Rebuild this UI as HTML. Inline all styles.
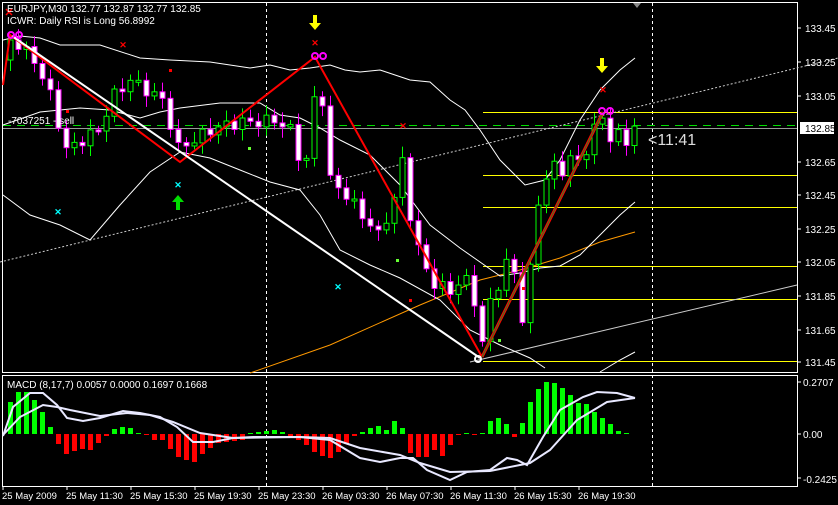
<!DOCTYPE html>
<html><head><meta charset="utf-8"><style>
body{margin:0;background:#000;width:838px;height:505px;overflow:hidden}
svg{display:block}
text{font-family:"Liberation Sans",sans-serif;font-size:10px;fill:#fff}
</style></head><body>
<svg id="s" width="838" height="505" viewBox="0 0 838 505" xmlns="http://www.w3.org/2000/svg">
<rect width="838" height="505" fill="#000"/>
<rect x="2.5" y="2.5" width="795" height="370" fill="none" stroke="#fff"/>
<rect x="2.5" y="375.5" width="795" height="111" fill="none" stroke="#fff"/>
<line x1="266.5" y1="3" x2="266.5" y2="486" stroke="#fff" stroke-dasharray="3,3"/>
<line x1="652.5" y1="3" x2="652.5" y2="486" stroke="#fff" stroke-dasharray="3,3"/>
<polygon points="633,3 641,3 637,8" fill="#888"/>
<line x1="483" y1="112.5" x2="797" y2="112.5" stroke="#ffff00"/>
<line x1="483" y1="175.5" x2="797" y2="175.5" stroke="#ffff00"/>
<line x1="483" y1="207.5" x2="797" y2="207.5" stroke="#ffff00"/>
<line x1="483" y1="266.5" x2="797" y2="266.5" stroke="#ffff00"/>
<line x1="483" y1="299.5" x2="797" y2="299.5" stroke="#ffff00"/>
<line x1="483" y1="361.5" x2="797" y2="361.5" stroke="#ffff00"/>
<line x1="3" y1="125.5" x2="797" y2="125.5" stroke="#00dd00" stroke-dasharray="8,6"/>
<line x1="3" y1="128.5" x2="797" y2="128.5" stroke="#999"/>
<line x1="0" y1="262" x2="838" y2="58" stroke="#ccc" stroke-dasharray="2,2"/>
<line x1="470" y1="362" x2="797" y2="285" stroke="#ccc"/>
<polyline points="250,373 330,345 420,305 480,280 520,270 560,258 600,242 635,232" fill="none" stroke="#f90"/>
<g fill="none" stroke="#fff" stroke-width="1">
<polyline points="3,40 20,36 40,38 60,45 100,45 140,58 170,60 210,62 250,68 270,65 290,70 310,68 330,65 345,70 360,72 380,70 410,80 430,82 450,100 465,110 480,130 500,160 525,185 545,180 560,160 580,120 600,90 620,70 635,58"/>
<polyline points="3,125 40,112 80,108 110,110 140,118 160,112 180,108 220,103 260,103 280,115 300,118 320,128 340,140 370,155 400,185 430,225 460,248 480,262 500,276 520,273 540,268 560,266 580,255 600,235 620,215 635,202"/>
<polyline points="3,195 30,215 60,225 90,240 120,205 150,172 180,152 210,158 240,170 270,182 300,190 320,215 340,250 370,265 400,278 440,300 470,330 500,345 530,358 545,368"/>
<polyline points="600,372 620,360 635,352"/>
</g>
<g id="candles"></g>
<polyline points="3,85 10,35 180,162 315,57 482,357" fill="none" stroke="#f00" stroke-width="2"/>
<line x1="482" y1="357" x2="603" y2="112" stroke="#f00" stroke-width="3"/>
<line x1="482" y1="357" x2="603" y2="112" stroke="#282" stroke-width="1"/>
<line x1="12" y1="36" x2="480" y2="358" stroke="#fff" stroke-width="2"/>
<g fill="none" stroke="#f0f" stroke-width="2">
<circle cx="11" cy="35" r="3"/><circle cx="19" cy="35" r="3"/>
<circle cx="315" cy="56" r="3"/><circle cx="323" cy="56" r="3"/>
<circle cx="602" cy="111" r="3"/><circle cx="610" cy="111" r="3"/>
</g>
<circle cx="478" cy="359" r="3" fill="none" stroke="#fff" stroke-width="2"/>
<g font-family="Liberation Sans" font-weight="bold" font-size="11" text-anchor="middle">
<text x="9" y="16" style="fill:#f00;font-size:11px">✕</text>
<text x="123" y="48" style="fill:#f00;font-size:9px">✕</text>
<text x="315" y="46" style="fill:#f00;font-size:9px">✕</text>
<text x="403" y="129" style="fill:#f00;font-size:9px">✕</text>
<text x="603" y="93" style="fill:#f00;font-size:9px">✕</text>
<text x="58" y="215" style="fill:#0ff;font-size:9px">✕</text>
<text x="178" y="188" style="fill:#0ff;font-size:9px">✕</text>
<text x="338" y="290" style="fill:#0ff;font-size:9px">✕</text>
</g>
<g fill="#f00"><rect x="66" y="110" width="3" height="3"/><rect x="169" y="69" width="3" height="3"/><rect x="409" y="299" width="3" height="3"/><rect x="522" y="287" width="3" height="3"/></g>
<g fill="#6f3"><rect x="248" y="147" width="3" height="3"/><rect x="396" y="259" width="3" height="3"/><rect x="498" y="339" width="3" height="3"/></g>
<path d="M313,15 v8 h-4 l6,7 l6,-7 h-4 v-8 z" fill="#ff0"/>
<path d="M600,58 v8 h-4 l6,7 l6,-7 h-4 v-8 z" fill="#ff0"/>
<path d="M176,210 v-8 h-4 l6,-7 l6,7 h-4 v8 z" fill="#0d0"/>
<text x="7" y="12">EURJPY,M30  132.77 132.87 132.77 132.85</text>
<text x="7" y="24">ICWR: Daily RSI is Long 56.8992</text>
<text x="8" y="124">-7037251 - sell</text>
<text x="648" y="145" style="font-size:16px;fill:#ddd">&lt;11:41</text>
<g>
<text x="805" y="32">133.45</text>
<text x="805" y="66">133.25</text>
<text x="805" y="100">133.05</text>
<rect x="800" y="122" width="34" height="12" fill="#fff"/>
<text x="805" y="132" style="fill:#000">132.85</text>
<text x="805" y="166">132.65</text>
<text x="805" y="199">132.45</text>
<text x="805" y="233">132.25</text>
<text x="805" y="266">132.05</text>
<text x="805" y="300">131.85</text>
<text x="805" y="334">131.65</text>
<text x="805" y="366">131.45</text>
<text x="803" y="386">0.2707</text>
<text x="803" y="438">0.00</text>
<text x="803" y="483">-0.2425</text>
</g>
<g stroke="#fff"><line x1="797" y1="28" x2="801" y2="28"/><line x1="797" y1="62" x2="801" y2="62"/><line x1="797" y1="96" x2="801" y2="96"/><line x1="797" y1="162" x2="801" y2="162"/><line x1="797" y1="195" x2="801" y2="195"/><line x1="797" y1="229" x2="801" y2="229"/><line x1="797" y1="262" x2="801" y2="262"/><line x1="797" y1="296" x2="801" y2="296"/><line x1="797" y1="330" x2="801" y2="330"/><line x1="797" y1="362" x2="801" y2="362"/><line x1="797" y1="382" x2="801" y2="382"/><line x1="797" y1="434" x2="801" y2="434"/><line x1="797" y1="478" x2="801" y2="478"/></g>
<text x="7" y="388">MACD  (8,17,7) 0.0057 0.0000 0.1697 0.1668</text>
<g id="macd"></g>
<g fill="none" stroke="#e8e8ff" stroke-width="2">
<polyline points="3,436 13,407 30,393 43,393 57,405 67,418 83,421 100,418 123,411 140,413 160,417 177,427 193,442 213,442 233,438 253,437 300,437 330,440 360,458 380,462 400,458 413,458 427,470 450,480 467,472 490,470 507,458 517,460 527,465 543,437 560,410 583,397 597,392 617,393 635,398"/>
<polyline points="3,435 20,417 43,405 57,407 70,410 100,416 127,413 150,415 173,422 200,433 233,438 300,437 330,438 360,448 400,455 420,463 450,472 490,471 530,463 550,450 577,420 607,402 635,398"/>
</g>
<g stroke="#fff"><line x1="3" y1="486" x2="3" y2="490"/><line x1="67" y1="486" x2="67" y2="490"/><line x1="131" y1="486" x2="131" y2="490"/><line x1="195" y1="486" x2="195" y2="490"/><line x1="259" y1="486" x2="259" y2="490"/><line x1="323" y1="486" x2="323" y2="490"/><line x1="387" y1="486" x2="387" y2="490"/><line x1="451" y1="486" x2="451" y2="490"/><line x1="515" y1="486" x2="515" y2="490"/><line x1="579" y1="486" x2="579" y2="490"/></g>
<g style="font-size:9.5px">
<text x="2" y="499" style="font-size:9.5px">25 May 2009</text>
<text x="66" y="499" style="font-size:9.5px">25 May 11:30</text>
<text x="130" y="499" style="font-size:9.5px">25 May 15:30</text>
<text x="194" y="499" style="font-size:9.5px">25 May 19:30</text>
<text x="258" y="499" style="font-size:9.5px">25 May 23:30</text>
<text x="322" y="499" style="font-size:9.5px">26 May 03:30</text>
<text x="386" y="499" style="font-size:9.5px">26 May 07:30</text>
<text x="450" y="499" style="font-size:9.5px">26 May 11:30</text>
<text x="514" y="499" style="font-size:9.5px">26 May 15:30</text>
<text x="578" y="499" style="font-size:9.5px">26 May 19:30</text>
</g>
</svg>
<script>
(function(){
var NS="http://www.w3.org/2000/svg";
function el(p,t,a){var e=document.createElementNS(NS,t);for(var k in a)e.setAttribute(k,a[k]);p.appendChild(e);return e;}
var kp=[[10,40],[18,45],[34,60],[50,95],[66,150],[82,140],[98,130],[114,95],[130,80],[146,90],[162,100],[178,148],[194,140],[210,130],[226,125],[242,122],[258,122],[274,120],[290,130],[298,155],[306,160],[314,100],[322,100],[330,180],[346,195],[362,215],[378,235],[394,200],[402,160],[410,215],[418,250],[434,285],[450,290],[466,280],[474,300],[482,345],[490,300],[498,285],[506,265],[514,270],[522,320],[530,270],[538,200],[546,180],[554,165],[562,170],[570,160],[578,160],[586,150],[594,130],[602,115],[610,140],[618,135],[626,140],[634,128]];
function at(x){for(var i=0;i<kp.length-1;i++){if(x<=kp[i+1][0]){var a=kp[i],b=kp[i+1];return a[1]+(b[1]-a[1])*(x-a[0])/(b[0]-a[0]);}}return kp[kp.length-1][1];}
var g=document.getElementById("candles");var prev=at(10)+20;
for(var i=0;i<79;i++){var x=10+8*i;if(x>636)break;var c=at(x)+Math.sin(i*2.3)*6;var o=prev;
var hi=Math.min(o,c)-3-Math.abs(Math.sin(i*1.7))*8,lo=Math.max(o,c)+3+Math.abs(Math.cos(i*1.3))*8;
var bull=c<o;var col=bull?"#0f0":"#f0f";
el(g,"line",{x1:x+0.5,y1:hi,x2:x+0.5,y2:lo,stroke:col});
var t=Math.min(o,c),h=Math.max(2,Math.abs(o-c));
el(g,"rect",{x:x-2,y:t,width:5,height:h,fill:bull?"#000":"#fff",stroke:col});
prev=c;}
var mv=[402,392,392,400,412,427,444,454,451,449,450,443,436,429,427,428,433,435,440,440,449,457,460,462,454,448,443,442,441,440,433,432,431,430,432,438,440,445,452,456,458,452,444,436,432,428,426,430,421,428,453,457,457,450,456,445,435,433,435,433,421,418,424,437,423,402,389,382,383,388,395,403,404,412,418,424,431,433];
var m=document.getElementById("macd");
for(var j=0;j<mv.length;j++){var bx=8+8*j;if(bx>636)break;var v=mv[j];
if(v<434)el(m,"rect",{x:bx,y:v,width:5,height:434-v,fill:"#0f0"});
else el(m,"rect",{x:bx,y:434,width:5,height:Math.max(1,v-434),fill:"#f00"});}
})();
</script>
</body></html>
